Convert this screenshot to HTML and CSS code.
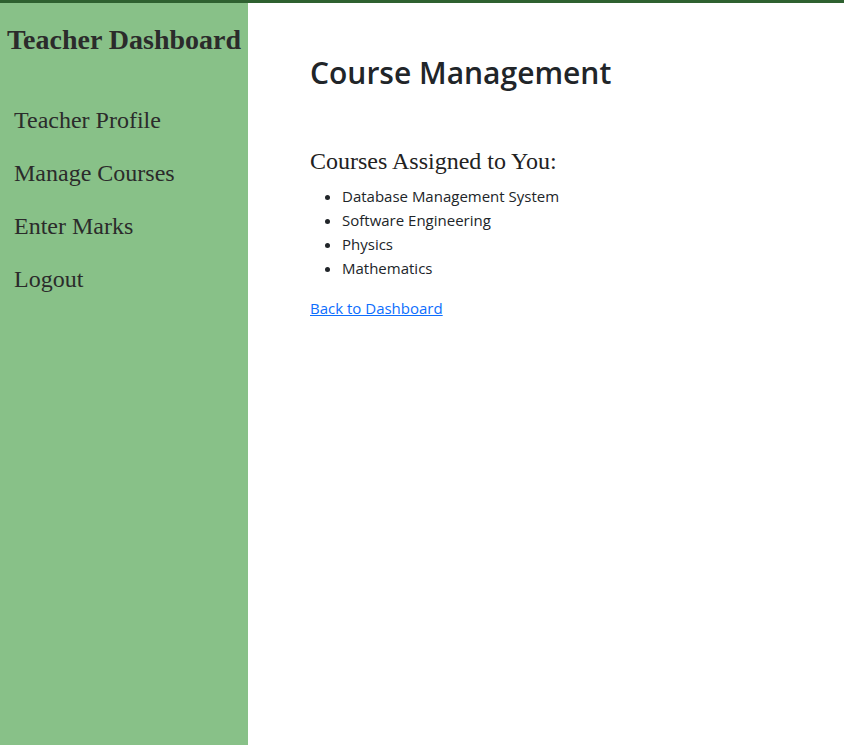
FILE: index.html
```html
<!DOCTYPE html>
<html>
<head>
<meta charset="utf-8">
<link rel="stylesheet" href="styles.css">
</head>
<body>
<div class="layout">
  <aside class="sidebar">
    <h2 class="brand">Teacher Dashboard</h2>
    <nav class="nav">
      <a href="#">Teacher Profile</a>
      <a href="#">Manage Courses</a>
      <a href="#">Enter Marks</a>
      <a href="#">Logout</a>
    </nav>
  </aside>
  <main class="content">
    <h1 class="title">Course Management</h1>
    <h3 class="subtitle">Courses Assigned to You:</h3>
    <ul class="courses">
      <li>Database Management System</li>
      <li>Software Engineering</li>
      <li>Physics</li>
      <li>Mathematics</li>
    </ul>
    <a class="back" href="#">Back to Dashboard</a>
  </main>
</div>
</body>
</html>
```
FILE: styles.css
```css
html, body {
  margin: 0;
  padding: 0;
  height: 100%;
}
body {
  border-top: 3px solid #2e6130;
  box-sizing: border-box;
  font-family: "Open Sans", "Noto Sans", sans-serif;
  color: #212529;
}
.layout {
  display: flex;
  height: 100%;
}
.sidebar {
  width: 248px;
  flex: none;
  background: #88c188;
  font-family: "Liberation Serif", "Times New Roman", serif;
  color: #2b2b2b;
}
.brand {
  margin: 22px 0 0 0;
  text-align: center;
  font-size: 28px;
  font-weight: bold;
  line-height: 30px;
}
.nav {
  display: flex;
  flex-direction: column;
  padding: 51px 0 0 14px;
  gap: 25px;
}
.nav a {
  color: #2b2b2b;
  text-decoration: none;
  font-size: 24px;
  line-height: 28px;
}
.content {
  flex: 1;
  padding: 50px 0 0 62px;
}
.title {
  margin: 0;
  font-size: 30px;
  font-weight: 600;
  line-height: 40px;
}
.subtitle {
  margin: 54px 0 0 0;
  font-family: "Liberation Serif", "Times New Roman", serif;
  font-weight: normal;
  font-size: 24px;
  line-height: 28px;
  color: #222;
}
.courses {
  margin: 9px 0 0 0;
  padding-left: 32px;
  font-size: 15px;
  line-height: 24px;
}
.back {
  display: inline-block;
  margin-top: 16px;
  color: #0d6efd;
  font-size: 15px;
  line-height: 24px;
}
```
